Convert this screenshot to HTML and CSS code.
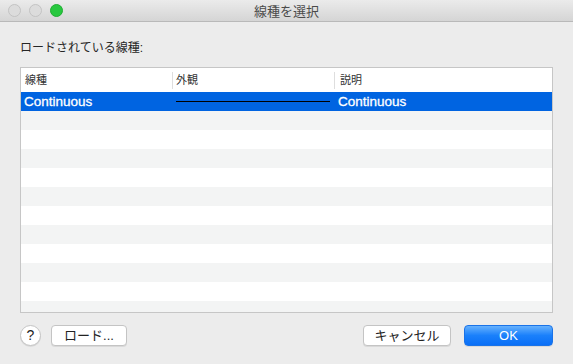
FILE: index.html
```html
<!DOCTYPE html>
<html lang="ja">

<head>
    <meta charset="UTF-8" />
    <title>線種を選択</title>
    <link rel="stylesheet" href="styles.css">
</head>

<body>
    <div class="window">
        <div class="titlebar">
            <div class="lights">
                <span class="light"></span>
                <span class="light"></span>
                <span class="light green"></span>
            </div>
            <div class="title">線種を選択</div>
        </div>

        <div class="content">
            <div class="label">ロードされている線種:</div>

            <div class="table">
                <div class="row header">
                    <div class="cell"><span>線種</span></div>
                    <div class="cell"><span class="sep">外観</span></div>
                    <div class="cell"><span class="sep">説明</span></div>
                </div>
                <div class="row selected">
                    <div class="cell">Continuous</div>
                    <div class="cell"><div class="linetype"></div></div>
                    <div class="cell">Continuous</div>
                </div>
                <div class="row"></div>
                <div class="row"></div>
                <div class="row"></div>
                <div class="row"></div>
                <div class="row"></div>
                <div class="row"></div>
                <div class="row"></div>
                <div class="row"></div>
                <div class="row"></div>
                <div class="row"></div>
                <div class="row"></div>
            </div>

            <div class="buttons">
                <button class="help">?</button>
                <button class="btn load">ロード...</button>
                <div class="spacer"></div>
                <button class="btn cancel">キャンセル</button>
                <button class="btn ok">OK</button>
            </div>
        </div>
    </div>
</body>

</html>
```

FILE: styles.css
```css
body {
    margin: 0;
    padding: 0;
    font-family: "Liberation Sans", "Noto Sans CJK JP", sans-serif;
    background-color: #ececec;
}

.window {
    width: 573px;
    height: 364px;
    display: flex;
    flex-direction: column;
    background-color: #ececec;
    overflow: hidden;
}

/* Title bar */
.titlebar {
    height: 21px;
    border-bottom: 1px solid #b9b9b9;
    background: linear-gradient(to bottom, #ebebeb, #d5d5d5);
    display: flex;
    align-items: center;
    position: relative;
}

.lights {
    display: flex;
    gap: 8px;
    padding-left: 8px;
}

.light {
    width: 11px;
    height: 11px;
    border-radius: 50%;
    background-color: #dcdcdc;
    border: 0.5px solid #c3c3c3;
}

.light.green {
    background-color: #28c83f;
    border-color: #1fae32;
}

.title {
    position: absolute;
    left: 0;
    right: 0;
    text-align: center;
    font-size: 13px;
    color: #4b4b4b;
}

/* Content */
.content {
    flex: 1;
    display: flex;
    flex-direction: column;
    padding: 18px 20px 0 20px;
}

.label {
    font-size: 12px;
    line-height: 16px;
    color: #262626;
    margin-bottom: 11px;
}

.table {
    height: 244px;
    border: 1px solid #c6c6c6;
    background-color: #ffffff;
    overflow: hidden;
}

.row {
    display: grid;
    grid-template-columns: 151px 162px 1fr;
    height: 19px;
    align-items: center;
}

.row:nth-child(odd) {
    background-color: #f3f4f4;
}

.row.header {
    height: 24px;
    background-color: #ffffff;
    font-size: 11px;
    color: #333;
}

.row.header .cell span {
    display: block;
    height: 17px;
    line-height: 17px;
    padding-left: 4px;
}

.row.header .cell span.sep {
    border-left: 1px solid #dedede;
    padding-left: 3px;
}

.row.header .cell:nth-child(3) span.sep {
    padding-left: 5px;
}

.row.selected {
    background-color: #0064e1;
    color: #ffffff;
    font-size: 13.5px;
    -webkit-text-stroke: 0.3px #ffffff;
}

.row.selected .cell {
    padding-left: 3px;
}

.row.selected .cell:nth-child(3) {
    padding-left: 4px;
}

.linetype {
    height: 1px;
    background-color: #000;
    margin: 0 4px 0 1px;
}

/* Buttons */
.buttons {
    display: flex;
    align-items: center;
    margin-top: 12px;
}

.spacer {
    flex: 1;
}

button {
    font-family: "Liberation Sans", "Noto Sans CJK JP", sans-serif;
    font-size: 13px;
    color: #222;
    background-color: #ffffff;
    border: 1px solid #c4c4c4;
    box-shadow: 0 1px 0 rgba(0, 0, 0, 0.08);
    padding: 0;
}

.help {
    width: 21px;
    height: 21px;
    border-radius: 50%;
    line-height: 19px;
    font-size: 14px;
    margin-right: 10px;
}

.btn {
    height: 21px;
    border-radius: 4px;
    line-height: 19px;
}

.load {
    width: 76px;
}

.cancel {
    width: 88px;
    margin-right: 13px;
}

.ok {
    width: 89px;
    color: #ffffff;
    border: 1px solid #1a73e8;
    background: linear-gradient(to bottom, #66b1fd, #1a80fb 50%, #0a6ff6);
}
```
